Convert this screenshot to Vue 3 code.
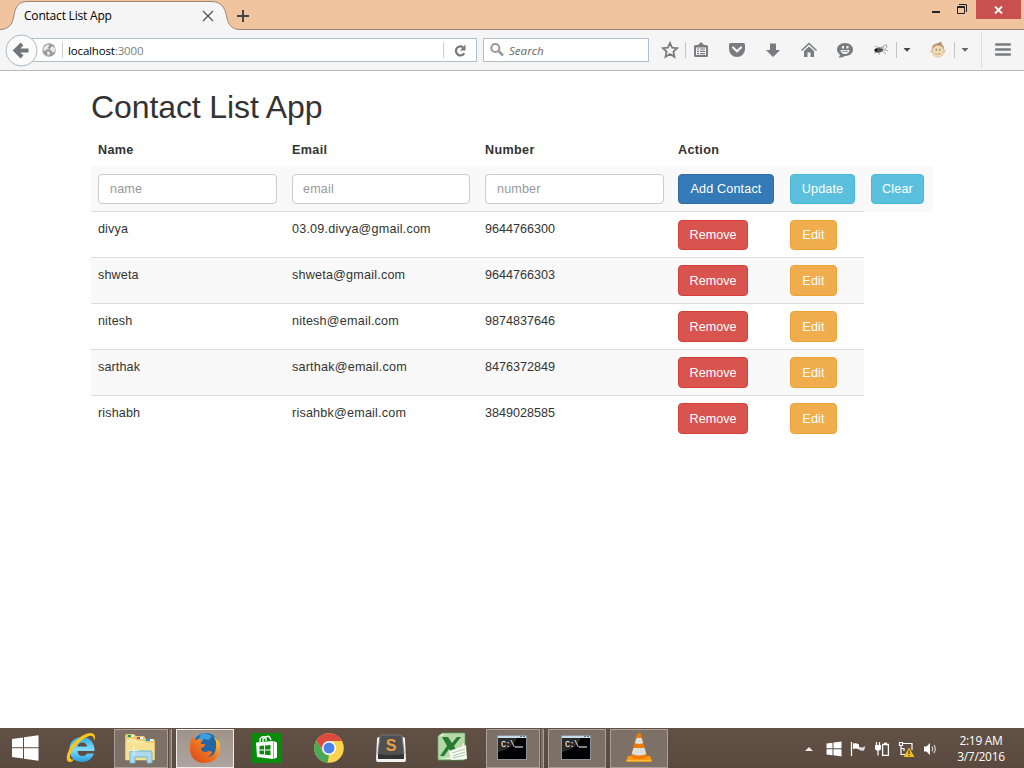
<script setup>
const contacts = [
  { name: 'divya', email: '03.09.divya@gmail.com', number: '9644766300' },
  { name: 'shweta', email: 'shweta@gmail.com', number: '9644766303' },
  { name: 'nitesh', email: 'nitesh@email.com', number: '9874837646' },
  { name: 'sarthak', email: 'sarthak@email.com', number: '8476372849' },
  { name: 'rishabh', email: 'risahbk@email.com', number: '3849028585' },
]
</script>

<template>
  <div class="screen">
    <header class="titlebar">
      <div class="tab">
        <svg class="tab-shape" width="244" height="30" viewBox="0 0 244 30">
          <path d="M0 30V29.500C8 29.500 12 25 13.500 18C15 7 18 1.500 28 1.500H211C221 1.500 225 7 227 18C228.500 25 232 29.500 240 29.500H244V30Z" fill="#f5f5f5" />
          <path d="M0 29.500C8 29.500 12 25 13.500 18C15 7 18 1.500 28 1.500H211C221 1.500 225 7 227 18C228.500 25 232 29.500 240 29.500H244" fill="none" stroke="#9c8877" />
        </svg>
        <span class="tab-title">Contact List App</span>
        <svg class="tab-close" width="12" height="12" viewBox="0 0 12 12"><path d="M1 1L11 11M11 1L1 11" stroke="#555" stroke-width="1.300" /></svg>
        <svg class="tab-new" width="12" height="12" viewBox="0 0 12 12"><path d="M6 0V12M0 6H12" stroke="#444" stroke-width="2" /></svg>
      </div>
      <div class="window-buttons">
        <svg width="9" height="3" viewBox="0 0 9 3" class="minimise"><rect width="8" height="2" fill="#222" /></svg>
        <svg width="11" height="11" viewBox="0 0 11 11" class="restore"><path d="M.5 2.500H7.500V9.500H.5ZM0 3.500H8M2 .5H9.500V8" fill="none" stroke="#222" /></svg>
        <div class="close"><svg width="9" height="8" viewBox="0 0 9 8"><path d="M1 .5L8 7.500M8 .5L1 7.500" stroke="#fff" stroke-width="1.800" /></svg></div>
      </div>
    </header>

    <nav class="toolbar">
      <svg class="back" width="33" height="33" viewBox="0 0 33 33">
        <circle cx="16.500" cy="16.500" r="15.500" fill="#fbfbfb" stroke="#a9b8c6" />
        <path d="M23.500 16.500H12M17 10L10.500 16.500L17 23" fill="none" stroke="#70767b" stroke-width="4" />
      </svg>
      <div class="urlbar">
        <svg class="globe" width="14" height="14" viewBox="0 0 14 14">
          <circle cx="7" cy="7" r="6.700" fill="#9a9a9a" />
          <path d="M2 4L5 1.500L7.500 2L6 4.500L7 6L4.500 6.500L3 8L1 7ZM8.500 5L10 3L13 5L13 8L10.500 10L9.500 7.500L7.500 7ZM5 8.500L8 9L7.500 12L5.500 12.500Z" fill="#e9e9e9" />
        </svg>
        <i class="rule"></i>
        <span class="url">localhost<em>:3000</em></span>
        <i class="rule reload-rule"></i>
        <svg class="reload" width="13" height="13" viewBox="0 0 13 13"><path d="M10.300 9.200A4.500 4.500 0 1 1 9 3.200" fill="none" stroke="#777" stroke-width="2.200" /><path d="M11.500 .5V6.500H5.800Z" fill="#777" /></svg>
      </div>
      <div class="searchbar">
        <svg width="14" height="14" viewBox="0 0 14 14"><circle cx="5.300" cy="5" r="4" fill="none" stroke="#999" stroke-width="2" /><path d="M8.500 8L13 12.500" stroke="#999" stroke-width="2.500" /></svg>
        <span>Search</span>
      </div>
      <div class="tools">
        <svg width="18" height="18" viewBox="0 0 18 18"><path d="M9 2L11.100 6.700L16.200 7.200L12.400 10.600L13.500 15.800L9 13.100L4.500 15.800L5.600 10.600L1.800 7.200L6.900 6.700Z" fill="none" stroke="#797c80" stroke-width="1.800" /></svg>
        <i class="sep"></i>
        <svg class="near" width="18" height="18" viewBox="0 0 18 18"><path fill="#797c80" fill-rule="evenodd" d="M3.500 4H6L9 1L12 4H14.500Q16 4 16 5.500V14.500Q16 16 14.500 16H3.500Q2 16 2 14.500V5.500Q2 4 3.500 4ZM4 6.500V14H14V6.500Z" /><path d="M5 8H7M8 8H13M5 10.300H7M8 10.300H13M5 12.600H7M8 12.600H13" stroke="#797c80" stroke-width="1.200" /></svg>
        <svg class="far" width="18" height="18" viewBox="0 0 18 18"><path d="M2.500 2H15.500Q17 2 17 3.500V8A8 8 0 0 1 1 8V3.500Q1 2 2.500 2Z" fill="#797c80" /><path d="M5 6.500L9 10.300L13 6.500" fill="none" stroke="#f5f5f5" stroke-width="2.200" stroke-linecap="round" /></svg>
        <svg class="far" width="18" height="18" viewBox="0 0 18 18"><path d="M6 2.500H12V9H16L9 16L2 9H6Z" fill="#797c80" /></svg>
        <svg class="far" width="18" height="18" viewBox="0 0 18 18"><path d="M1.500 9.500L9 2.500L16.500 9.500" fill="none" stroke="#797c80" stroke-width="1.600" /><path d="M4 10L9 5.500L14 10V16H10.500V11.500H7.500V16H4Z" fill="#797c80" /></svg>
        <svg class="far" width="18" height="18" viewBox="0 0 18 18"><path d="M9 2C14 2 17 5 17 8.500C17 12.500 13.500 15 9 15Q6 17 2.500 16.500Q4 15 4 13.500C2.500 12.500 1 11 1 8.500C1 5 4 2 9 2Z" fill="#797c80" /><path d="M4.500 9H13.500Q13 13 9 13Q5 13 4.500 9ZM6 5H8V7.500H6ZM10.500 5H12.500V7.500H10.500Z" fill="#f5f5f5" /><path d="M6 10.300H12" stroke="#797c80" stroke-width=".8" /></svg>
        <svg class="far fly" width="18" height="18" viewBox="0 0 18 18"><ellipse cx="7" cy="9" rx="4.500" ry="2.500" transform="rotate(-15 7 9)" fill="#555" /><path d="M8 7L14.500 3.500L15 6L12 9L16 9.500M7 7L3 5M5 10L2 13M8 11L7 14M10 10L14 13" fill="none" stroke="#999" stroke-width=".8" /><path d="M8 7L13 4.500L11 8Z" fill="#bbb" /><circle cx="4" cy="9" r="1.500" fill="#111" /></svg>
        <i class="sep"></i>
        <svg class="near" width="8" height="18" viewBox="0 0 8 18"><path d="M.5 7H7.500L4 10.700Z" fill="#444" /></svg>
        <svg class="far monkey" width="18" height="18" viewBox="0 0 18 18"><path d="M3 8Q3 2.500 9 2.500Q15 2.500 15 8Z" fill="#b58c6c" /><circle cx="3" cy="10" r="1.700" fill="#e5c5a0" /><circle cx="15" cy="10" r="1.700" fill="#e5c5a0" /><rect x="3.500" y="4.500" width="11" height="11.500" rx="5" fill="#f4dcb6" stroke="#d5b592" stroke-width=".7" /><path d="M7 4Q9 1 13 1L12 4Z" fill="#b58967" /><path d="M7.300 7.500V10M10.700 7.500V10" stroke="#8f9c91" stroke-width="1.300" /><path d="M6 12.500Q9 14 12 12.500" fill="none" stroke="#c8a483" /></svg>
        <i class="sep later"></i>
        <svg class="near" width="8" height="18" viewBox="0 0 8 18"><path d="M.5 7H7.500L4 10.700Z" fill="#666" /></svg>
        <i class="sep tall"></i>
        <svg class="menu" width="18" height="18" viewBox="0 0 18 18"><path d="M2.200 3.500H15.800M2.200 8.500H15.800M2.200 13.500H15.800" stroke="#797c80" stroke-width="2.600" stroke-linecap="round" /></svg>
      </div>
    </nav>

    <main class="page">
      <h1>Contact List App</h1>
      <div class="table">
        <div class="row head"><b>Name</b><b>Email</b><b>Number</b><b>Action</b></div>
        <div class="row form">
          <div><input placeholder="name" /></div>
          <div><input class="email-input" placeholder="email" /></div>
          <div><input placeholder="number" /></div>
          <div><button class="btn add">Add Contact</button></div>
          <div><button class="btn info">Update</button></div>
          <div><button class="btn info clear">Clear</button></div>
        </div>
        <div v-for="c in contacts" :key="c.name" class="row contact">
          <span class="name">{{ c.name }}</span>
          <span class="email">{{ c.email }}</span>
          <span>{{ c.number }}</span>
          <div><button class="btn remove">Remove</button></div>
          <div><button class="btn edit">Edit</button></div>
        </div>
      </div>
    </main>

    <footer class="taskbar">
      <svg class="start" width="28" height="28" viewBox="0 0 28 28"><path d="M1 5L12 3.500V13.300H1ZM13 3.300L27.500 1.300V13.300H13ZM1 14.300H12V24.500L1 23ZM13 14.300H27.500V26.700L13 24.700Z" fill="#fff" /></svg>
      <div class="apps">
        <div class="app">
          <svg width="32" height="32" viewBox="0 0 32 32">
            <defs><linearGradient id="ie" x1="0" y1="0" x2="0" y2="1"><stop offset="0" stop-color="#2fa8e0" /><stop offset=".5" stop-color="#7fdcfa" /><stop offset="1" stop-color="#2a9ddb" /></linearGradient></defs>
            <path fill="url(#ie)" fill-rule="evenodd" d="M17 5C25 5 30 11 29.500 19H12.500Q13 24 17.500 24Q20.500 24 22 21.500H29Q26 30 17 30C9 30 4.500 25 4.500 17.500C4.500 10 9.500 5 17 5ZM12.500 14.500H22Q21.500 10.500 17.500 10.500Q13.500 10.500 12.500 14.500Z" />
            <path d="M5 30C-2 30 3 14 14 6C22 0 30-1 30 5Q30 7 29 9Q29 3 24.500 4C17 6 5 18 5 25Q5 28 9 27.500Q7 30 5 30Z" fill="#f8c51d" />
          </svg>
        </div>
        <div class="app open stacked explorer">
          <svg width="34" height="32" viewBox="0 0 34 32">
            <path d="M2 4L3 2H11L13 4H21L23 7H31L32 9V28H2Z" fill="#e8ca76" />
            <path d="M3 6H12L14 8H21L23 10H31V28H3Z" fill="#fae8a4" stroke="#d9b75d" stroke-width=".8" />
            <path d="M3 11H31V28H3Z" fill="#f7e293" />
            <path d="M5 3H8V5H5Z" fill="#18a531" /><path d="M8 3H11V5H8ZM17 5H20V7H17ZM27 7H30V9H27Z" fill="#fff" /><path d="M14 5H17V7H14Z" fill="#d84a2e" /><path d="M23 7H27V9H23Z" fill="#2696dc" />
            <path d="M7 21Q7 19 9 19H27Q29 19 29 21V31H24V25H12V31H7Z" fill="#aedaf0" stroke="#6fb5d3" />
            <path d="M11 14V23M7 18.500H15" stroke="#fff" stroke-width=".9" opacity=".8" />
          </svg>
        </div>
        <div class="app open active">
          <svg width="32" height="32" viewBox="0 0 32 32">
            <defs><linearGradient id="fox" x1="0" y1="1" x2="1" y2="0"><stop offset="0" stop-color="#d94318" /><stop offset=".55" stop-color="#f27921" /><stop offset="1" stop-color="#ffdc38" /></linearGradient></defs>
            <circle cx="17" cy="14" r="13" fill="#2266a6" /><path d="M12 2Q17 0 23 4L20 8L15 7L12 11L9 8Z" fill="#3e9edb" />
            <path d="M3 5L7 8Q10 6 13 8Q11 10 12 12H16Q16 15 12 16Q12 20 17 20Q21 18 23 20Q22 24 17 25Q26 25 27 16Q28 8 24 4Q32 8 31 18C30 27 23 31 15 31C6 31 0 24 1 15Q1 10 3 5Z" fill="url(#fox)" />
          </svg>
        </div>
        <div class="app">
          <svg width="30" height="30" viewBox="0 0 30 30"><rect width="30" height="30" fill="#078b0b" /><path d="M4 9.500L21 8V26L5 24ZM21.500 8L25 9.500V24.500L21.500 26Z" fill="#fff" /><path d="M8 9V6Q11 2 14 5V8M11 9V6Q17 0 19 7" fill="none" stroke="#fff" stroke-width="1.300" /><path d="M7.500 13L12 12.500V16.500H7.500ZM13 12.400L18.500 12V16.500H13ZM7.500 17.500H12V21.500L7.500 21ZM13 17.500H18.500V22.300L13 21.700Z" fill="#078b0b" /></svg>
        </div>
        <div class="app">
          <svg width="30" height="30" viewBox="0 0 30 30"><circle cx="15" cy="15" r="14.800" fill="#fcd34d" /><path d="M2.200 7.500A14.800 14.800 0 0 1 28 8H15L9 18Z" fill="#dc4b3e" /><path d="M2.200 7.500L8.900 18.500Q11 22 15 22.500L13.500 29.700A14.800 14.800 0 0 1 2.200 7.500Z" fill="#48a957" /><circle cx="15" cy="15" r="7" fill="#fff" /><circle cx="15" cy="15" r="5.500" fill="#4b83e8" /></svg>
        </div>
        <div class="app sublime">
          <svg width="32" height="32" viewBox="0 0 32 32"><path d="M2 6Q2 4 4 4H28Q30 4 30 6L31 27Q31 29 29 29H3Q1 29 1 27Z" fill="#f2f2f2" /><path d="M5 3Q5 2 7 2H25Q27 2 27 3L29 20Q29 23 26 23H6Q3 23 3 20Z" fill="#505050" stroke="#777" /><path d="M3 21Q16 23 29 21V26H3Z" fill="#333" /><text x="16" y="18" text-anchor="middle" font-family="Liberation Sans" font-weight="bold" font-size="16" fill="#eca044">S</text></svg>
        </div>
        <div class="app excel">
          <svg width="32" height="32" viewBox="0 0 32 32"><path d="M6 2H29V29H2V5Z" fill="#e3f0dc" stroke="#4d9848" /><path d="M3 6L10 3L28 3V11L20 25L3 28Z" fill="#b5d8a6" /><path d="M6 6H12L16 12L21 6H25L18 15L23 24H17L13 18L8 25H4L11 15Z" fill="#267b35" /><path d="M13 20L30 14L31 28L15 29Z" fill="#f6fbf3" /><path d="M16 22L29 18M17 25L29 21M17 27L29 24" stroke="#8eb786" stroke-width=".7" /></svg>
        </div>
        <div class="app open stacked console">
          <svg width="31" height="26" viewBox="0 0 31 26"><rect x=".5" y=".5" width="29" height="24" fill="#000" stroke="#8b9498" /><path d="M1 1H29V3H1Z" fill="#c7dce8" /><path d="M1 17Q16 14 20 3H1Z" fill="#292929" /><path d="M23 1.500H25M26 1.500H28" stroke="#5c7893" /><text x="4" y="12" font-family="Liberation Mono" font-size="8.500" textLength="14" fill="#fff">C:\</text><path d="M18 12H26" stroke="#fff" /></svg>
        </div>
        <div class="app open console">
          <svg width="31" height="26" viewBox="0 0 31 26"><rect x=".5" y=".5" width="29" height="24" fill="#000" stroke="#8b9498" /><path d="M1 1H29V3H1Z" fill="#c7dce8" /><path d="M1 17Q16 14 20 3H1Z" fill="#292929" /><path d="M23 1.500H25M26 1.500H28" stroke="#5c7893" /><text x="4" y="12" font-family="Liberation Mono" font-size="8.500" textLength="14" fill="#fff">C:\</text><path d="M18 12H26" stroke="#fff" /></svg>
        </div>
        <div class="app open">
          <svg width="28" height="32" viewBox="0 0 28 32"><path d="M3 24H25L27 29Q27 30 25 30H3Q1 30 1 29Z" fill="#f99a12" /><path d="M12 2Q14 0 16 2L22 24Q21 27 14 27Q7 27 6 24Z" fill="#f17b08" /><path d="M11.500 6H16.500L18.200 11Q14 13 9.800 11ZM8.300 16H19.700L21.200 22Q14 25 6.800 22Z" fill="#dededb" /><path d="M2 28.500H26" stroke="#ffc04b" /></svg>
        </div>
      </div>
      <div class="tray">
        <svg width="8" height="6" viewBox="0 0 8 6"><path d="M0 5L4 1L8 5Z" fill="#eee" /></svg>
        <svg width="16" height="16" viewBox="0 0 16 16"><path d="M.5 2.500L6.500 1.700V7.300H.5ZM7.500 1.600L15.500.5V7.300H7.500ZM.5 8.300H6.500V14.200L.5 13.400ZM7.500 8.300H15.500V15.500L7.500 14.300Z" fill="#fff" /></svg>
        <svg width="16" height="16" viewBox="0 0 16 16"><path d="M1.500 1V15" stroke="#fff" stroke-width="1.300" /><path d="M3 2.500Q6 1.500 9 3.500V8.500Q6 7 3 8Z" fill="#fff" /><path d="M9 5.500Q12 7.500 15.500 5L14 9.500Q11 10.500 9 8.500Z" fill="#ddd" /></svg>
        <svg width="16" height="16" viewBox="0 0 16 16"><path d="M2.500 1V4M5.500 1V4M4 9V14.500" stroke="#fff" stroke-width="1.200" /><path d="M1 4H7V7.500Q7 9.500 4 9.500Q1 9.500 1 7.500Z" fill="#fff" /><path d="M8.600 3.500H14.400V14.400H8.600Z" fill="none" stroke="#fff" stroke-width="1.300" /><path d="M10 2.300H13" stroke="#fff" stroke-width="1.300" /></svg>
        <svg width="17" height="17" viewBox="0 0 17 17"><path d="M1.500 1.500H4.500V4.500H1.500ZM3 4.500V13.500H7M5 2.500H14V9M3 7.500H6V10" fill="none" stroke="#fff" stroke-width="1.200" /><path d="M11 6.500L16.500 16H5.500Z" fill="#f4bd16" /><path d="M11 9.500V13M11 14V15" stroke="#333" stroke-width="1.200" /></svg>
        <svg width="16" height="16" viewBox="0 0 16 16"><path d="M1 5.500H3.500L7 2V14L3.500 10.500H1Z" fill="#fff" /><path d="M9 5.500Q10.500 8 9 10.500M11 4Q13.500 8 11 12" fill="none" stroke="#ddd" stroke-width="1.100" /></svg>
      </div>
      <div class="clock"><span>2:19 AM</span><span>3/7/2016</span></div>
    </footer>
  </div>
</template>

<style>
html, body { margin: 0; overflow: hidden; background: #fff; }
</style>

<style scoped>
* { box-sizing: border-box; }
svg { display: block; flex: none; }
.screen { width: 1024px; height: 768px; display: flex; flex-direction: column; font-family: "Liberation Sans", Arial, sans-serif; font-size: 12.6px; color: #333; background: #fff; overflow: hidden; }
.titlebar { height: 30px; flex: none; display: flex; justify-content: space-between; background: #f0c49f; border-bottom: 1px solid #9c8877; }
.tab { position: relative; display: flex; align-items: center; width: 250px; height: 30px; padding: 2px 0 0 24px; font: 12px "Open Sans", sans-serif; color: #000; }
.tab-shape { position: absolute; left: 0; top: 0; }
.tab-title { position: relative; width: 178px; padding-bottom: 1px; font-size: 12px; letter-spacing: -.2px; white-space: nowrap; }
.tab-close { position: relative; }
.tab-new { margin-left: 23px; }
.window-buttons { display: flex; width: 92px; }
.minimise { margin-top: 11px; }
.restore { margin: 4px 0 0 16px; }
.close { width: 45px; height: 19px; margin-left: 8px; display: flex; align-items: center; justify-content: center; background: #c8504f; }
.toolbar { height: 41px; flex: none; display: flex; align-items: center; padding-left: 5px; background: #f5f5f5; border-bottom: 1px solid #bbb; }
.back { position: relative; z-index: 1; }
.urlbar { width: 446px; height: 24px; margin-left: -7px; display: flex; align-items: center; padding-left: 10px; border: 1px solid #b1bfcc; border-left: 0; background: #fff; font: 11.500px "Open Sans", sans-serif; }
.globe { margin-left: 1px; }
.rule { width: 1px; height: 16px; margin-left: 6px; background: #ccc; }
.url { width: 375px; margin-left: 5px; letter-spacing: -.15px; color: #000; }
.url em { font-style: normal; color: #808080; }
.reload-rule { margin-left: 0; }
.reload { margin-left: 10px; }
.searchbar { width: 166px; height: 24px; margin-left: 6px; padding-left: 6px; display: flex; align-items: center; gap: 5px; background: #fff; border: 1px solid #b1bfcc; font: italic 11.600px "Open Sans", sans-serif; color: #666; }
.tools { display: flex; align-items: center; margin-left: 12px; }
.sep { width: 1px; height: 16px; margin-left: 6px; background: #c4c4c4; }
.near { margin-left: 6px; }
.far { margin-left: 18px; }
.later { margin-left: 7px; }
.tall { height: 36px; margin-left: 12px; background: #dedede; }
.menu { margin-left: 12px; }
.page { height: 657px; flex: none; padding: 17px 0 0 91px; }
h1 { margin: 0; height: 42px; font-size: 32px; font-weight: 400; line-height: 38px; letter-spacing: -.1px; }
.table { width: 842px; }
.row { display: grid; grid-template-columns: 194px 193px 193px 112px 81px 69px; }
.row > * { padding: 7px 7px 0; }
.head { height: 36px; line-height: 26px; letter-spacing: .35px; }
.form { height: 46px; margin-bottom: -1px; background: #f9f9f9; }
.form > * { padding-top: 8px; }
input { display: block; width: 179px; height: 30px; padding: 0 11px; border: 1px solid #ccc; border-radius: 4px; background: #fff; font: 12.600px "Liberation Sans", sans-serif; letter-spacing: .15px; }
.email-input { width: 178px; padding-left: 10px; }
input::placeholder { color: #999; opacity: 1; }
.contact { width: 773px; height: 46px; grid-template-columns: 194px 193px 193px 112px 81px; line-height: 20px; border-top: 1px solid #ddd; }
.contact > div { padding-top: 8px; }
.contact:nth-child(even) { background: #f9f9f9; }
.contact:nth-child(n + 4) > div { padding-top: 7px; }
.contact:nth-child(n + 4) .btn { height: 31px; }
.name { letter-spacing: .12px; }
.email { letter-spacing: .2px; }
.btn { display: block; height: 30px; padding: 0; border: 1px solid; border-radius: 4px; color: #fff; font: 12.600px "Liberation Sans", sans-serif; letter-spacing: .15px; white-space: nowrap; }
.add { width: 96px; background: #337ab7; border-color: #2e6da4; }
.info { width: 65px; background: #5bc0de; border-color: #46b8da; }
.clear { width: 53px; }
.remove { width: 70px; background: #d9534f; border-color: #d43f3a; letter-spacing: 0; }
.edit { width: 47px; background: #f0ad4e; border-color: #eea236; }
.taskbar { height: 40px; flex: none; display: flex; align-items: center; background: linear-gradient(#625044, #594a40); }
.start { margin-left: 11px; }
.apps { display: flex; gap: 4px; margin-left: 13px; }
.app { width: 58px; height: 39px; display: flex; align-items: center; justify-content: center; }
.open { border: 1px solid #aaa098; background: #7d7066; }
.active { border-color: #eee; background: linear-gradient(#9f9289, #afa59e); }
.stacked { width: 54px; margin-right: 4px; box-shadow: 1px 0 #594a40, 3px 0 #7d7066, 4px 0 #aaa098; }
.explorer { padding-right: 3px; }
.sublime { padding-top: 1px; }
.excel { padding: 0 2px 2px 0; }
.console { padding: 0 1px 1px 0; }
.tray { display: flex; align-items: center; gap: 8px; margin-left: 137px; padding-top: 2px; }
.tray svg:first-child { margin-right: 5px; }
.clock { width: 64px; margin-left: 10px; display: flex; flex-direction: column; align-items: center; padding-top: 1px; color: #fff; font: 12px/16px "Open Sans", sans-serif; letter-spacing: -.3px; }
</style>
